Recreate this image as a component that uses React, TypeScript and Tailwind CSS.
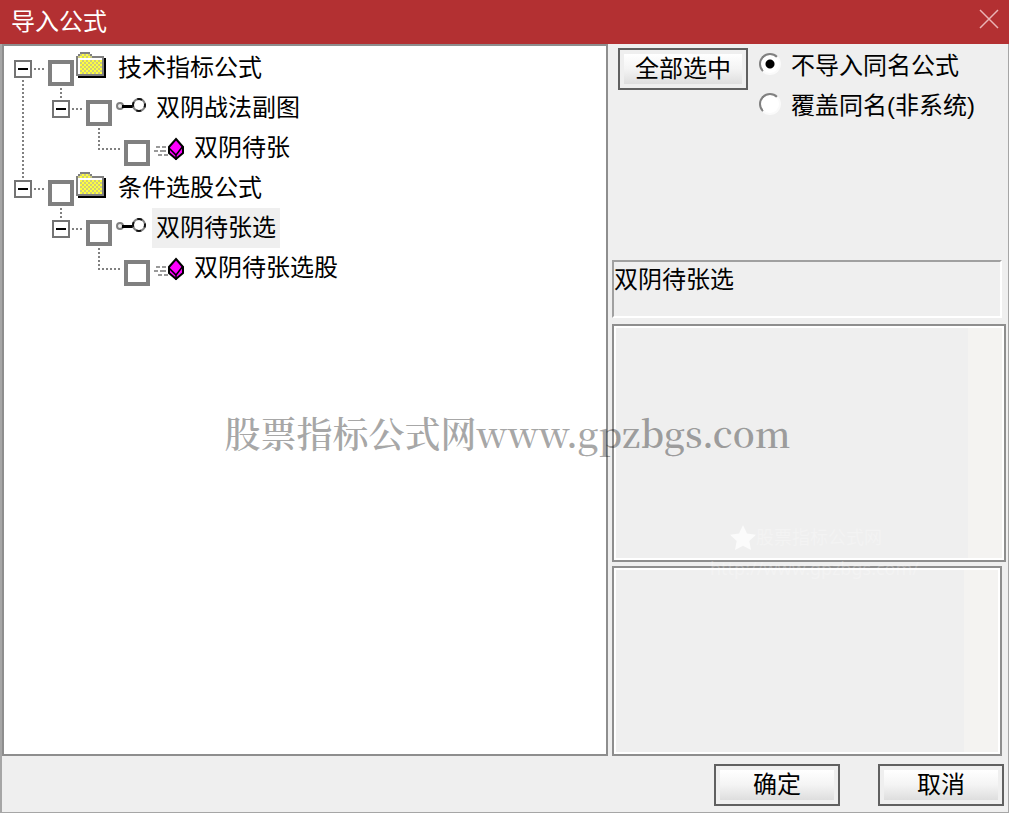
import { useState } from 'react';
import type { ReactNode } from 'react';

type IconKind = 'folder' | 'key' | 'formula';
// what the guide cell in front of a row's tick box holds
type Guide = 'blank' | 'line' | 'lineEnd';

interface TreeRow {
    id: string;
    label: string;
    icon: IconKind;
    level: 1 | 2 | 3;
    trunk: boolean; // the root line passes by this row
    first?: boolean;
    last?: boolean;
}

const rows: TreeRow[] = [
    { id: 'tech', label: '技术指标公式', icon: 'folder', level: 1, trunk: true, first: true },
    { id: 'tech-sub', label: '双阴战法副图', icon: 'key', level: 2, trunk: true },
    { id: 'tech-item', label: '双阴待张', icon: 'formula', level: 3, trunk: true },
    { id: 'cond', label: '条件选股公式', icon: 'folder', level: 1, trunk: false, last: true },
    { id: 'cond-sub', label: '双阴待张选', icon: 'key', level: 2, trunk: false },
    { id: 'cond-item', label: '双阴待张选股', icon: 'formula', level: 3, trunk: false },
];

const V_DOTS = 'w-0.5 bg-[linear-gradient(#808080_50%,transparent_50%)] bg-[length:2px_4px]';
const H_DOTS = 'h-0.5 bg-[linear-gradient(90deg,#808080_50%,transparent_50%)] bg-[length:4px_2px]';

function FolderIcon() {
    return (
        <svg width="40" height="40" viewBox="0 0 40 40" shapeRendering="crispEdges" aria-hidden="true">
            <defs>
                <pattern id="weave" width="4" height="4" patternUnits="userSpaceOnUse">
                    <rect width="4" height="4" fill="#ffff3c" />
                    <rect width="2" height="2" fill="#cccc80" />
                    <rect x="2" y="2" width="2" height="2" fill="#cccc80" />
                </pattern>
            </defs>
            <path d="M4 10h28v20H4z" fill="#000" />
            <path d="M6 4h10v2h2v2h12v20H2V8h2V6h2z" fill="#808080" />
            <path d="M6 6h10v2h2v2H4V8h2z" fill="url(#weave)" />
            <path d="M4 10h24v16H4z" fill="#fff" />
            <path d="M6 12h22v14H6z" fill="url(#weave)" />
        </svg>
    );
}

function KeyIcon() {
    return (
        <svg width="40" height="40" viewBox="0 0 40 40" aria-hidden="true">
            <circle cx="8" cy="18" r="3" fill="#eee" stroke="#808080" strokeWidth="2" />
            <path d="M10 17h11v3H10z" fill="#000" />
            <circle cx="27" cy="17" r="6" fill="#fff" stroke="#808080" strokeWidth="2" />
            <circle cx="27" cy="17" r="6" fill="none" stroke="#111" strokeWidth="2" strokeDasharray="5 4.425" strokeDashoffset="2.500" />
        </svg>
    );
}

function FormulaIcon() {
    return (
        <svg width="40" height="40" viewBox="0 0 40 40" aria-hidden="true">
            <path d="M6 19h4m2 0h4M4 23h4m2 0h6M8 27h4m2 0h4" stroke="#999" strokeWidth="2" />
            <path d="M26 11l7 8v6l-7 6-7-6v-6z" fill="#f0f" stroke="#000" strokeWidth="2" />
            <path d="M19 20l7 7 7-9M26 27v5" fill="none" stroke="#000" strokeWidth="1.500" />
        </svg>
    );
}

function RowIcon({ kind }: { kind: IconKind }) {
    if (kind === 'folder') return <FolderIcon />;
    if (kind === 'key') return <KeyIcon />;
    return <FormulaIcon />;
}

function GuideCell({ kind }: { kind: Guide }) {
    return (
        <div className="w-[38px] h-10 shrink-0 pl-3">
            {kind === 'line' && <div className={`h-10 ${V_DOTS}`} />}
            {kind === 'lineEnd' && (
                <>
                    <div className={`h-5 ${V_DOTS}`} />
                    <div className={`w-[22px] ${H_DOTS}`} />
                </>
            )}
        </div>
    );
}

function ExpanderCell({ row, onToggle }: { row: TreeRow; onToggle: () => void }) {
    return (
        <div className="w-[38px] h-10 shrink-0 pl-1 flex flex-col">
            <div className="h-3 pl-2">{!row.first && <div className={`h-2.5 ${V_DOTS}`} />}</div>
            <div className="flex items-center gap-0.5">
                <button
                    type="button"
                    aria-label={`折叠 ${row.label}`}
                    onClick={onToggle}
                    className="size-[18px] border-2 border-[#747474] bg-white flex items-center justify-center"
                >
                    <span className="w-2.5 h-0.5 bg-black" />
                </button>
                <div className={`w-2.5 ${H_DOTS}`} />
            </div>
            <div className="pl-2 pt-0.5">{row.level === 1 && !row.last && <div className={`h-2 ${V_DOTS}`} />}</div>
        </div>
    );
}

function PushButton({ children, className = '' }: { children: ReactNode; className?: string }) {
    return (
        <button type="button" className={`h-[42px] border-2 border-[#606060] bg-[#efefef] p-1 ${className}`}>
            <span className="flex h-full items-center justify-center bg-linear-to-b from-white via-[#f4f4f4] to-[#dedede]">
                {children}
            </span>
        </button>
    );
}

function RadioOption({ label, checked, onChange }: { label: string; checked: boolean; onChange: () => void }) {
    return (
        <label className="flex h-10 items-center gap-2.5 whitespace-nowrap">
            <input
                type="radio"
                name="conflict"
                checked={checked}
                onChange={onChange}
                className="mb-1 size-[22px] shrink-0 appearance-none rounded-full border-2 border-t-[#808080] border-l-[#808080] border-r-[#fafafa] border-b-[#fafafa] bg-white checked:bg-[radial-gradient(circle,#000_4px,#fff_5px)]"
            />
            {label}
        </label>
    );
}

function TextPane({ label, className, children }: { label: string; className: string; children?: ReactNode }) {
    return (
        <div className={`relative flex border-2 border-[#8e8e8e] bg-white p-0.5 ${className}`}>
            <textarea readOnly aria-label={label} className="block min-w-0 flex-1 resize-none bg-[#efefef] outline-none" />
            <div className="w-[34px] bg-[#f4f3f1]" />
            {children}
        </div>
    );
}

export default function App() {
    const [selected, setSelected] = useState('cond-sub');
    const [checked, setChecked] = useState<string[]>([]);
    const [mode, setMode] = useState<'skip' | 'overwrite'>('skip');

    const toggle = (id: string) =>
        setChecked(prev => (prev.includes(id) ? prev.filter(x => x !== id) : [...prev, id]));

    const current = rows.find(r => r.id === selected);

    return (
        <div className="relative flex min-h-screen flex-col bg-[#efefef] font-['Liberation_Sans','Noto_Sans_CJK_SC',sans-serif] text-2xl text-black">
            <header className="flex h-11 items-center justify-between bg-[#b33032] pr-2.5 pl-[11px] text-white">
                <h1 className="leading-10">导入公式</h1>
                <button type="button" aria-label="关闭" className="pb-1.5">
                    <svg width="20" height="20" viewBox="0 0 20 20" stroke="#eab4b5" strokeWidth="1.500">
                        <path d="M1 1l18 18M19 1L1 19" />
                    </svg>
                </button>
            </header>

            <div className="flex flex-1 flex-col border-r border-b border-l-2 border-[#a6a6a6]">
                <main className="grid flex-1 grid-cols-[minmax(0,1fr)_400px]">
                    {/* Formula tree */}
                    <ul className="border-2 border-[#8e8e8e] bg-white pt-0.5 pl-1.5">
                        {rows.map(row => (
                            <li key={row.id} className="flex h-10 items-start">
                                {row.level > 1 && <GuideCell kind={row.trunk ? 'line' : 'blank'} />}
                                {row.level > 2 && <GuideCell kind="blank" />}
                                {row.level === 3 ? (
                                    <GuideCell kind="lineEnd" />
                                ) : (
                                    <ExpanderCell row={row} onToggle={() => setSelected(row.id)} />
                                )}
                                <input
                                    type="checkbox"
                                    id={row.id}
                                    checked={checked.includes(row.id)}
                                    onChange={() => toggle(row.id)}
                                    className="mt-3 size-[26px] shrink-0 appearance-none border-4 border-[#808080] bg-white checked:bg-[#808080]"
                                />
                                <RowIcon kind={row.icon} />
                                <label
                                    htmlFor={row.id}
                                    onClick={() => setSelected(row.id)}
                                    className={`px-1 leading-10 whitespace-nowrap ${selected === row.id ? 'bg-[#efefef]' : ''}`}
                                >
                                    {row.label}
                                </label>
                            </li>
                        ))}
                    </ul>

                    {/* Options and details */}
                    <div className="flex flex-col pr-0.5 pl-1">
                        <div className="flex h-[216px] items-start pl-1.5">
                            <PushButton className="mt-1 w-[130px] shrink-0">全部选中</PushButton>
                            <fieldset className="pt-0.5 pl-[11px]">
                                <RadioOption label="不导入同名公式" checked={mode === 'skip'} onChange={() => setMode('skip')} />
                                <RadioOption label="覆盖同名(非系统)" checked={mode === 'overwrite'} onChange={() => setMode('overwrite')} />
                            </fieldset>
                        </div>
                        <p className="mr-1 h-[58px] border-2 border-t-[#a0a0a0] border-r-white border-b-white border-l-[#a0a0a0] leading-9">
                            {current?.label}
                        </p>
                        <TextPane label="公式说明" className="mt-1.5 flex-1">
                            <div className="pointer-events-none absolute -bottom-6 left-24 z-10 text-white/25">
                                <div className="flex items-center pl-5 text-lg">
                                    <svg width="26" height="26" viewBox="0 0 26 26" fill="#fbfbfb" aria-hidden="true">
                                        <path d="M13 0l4 8.500 9 1.200-6.700 6.300L21 25l-8-4.300L5 25l1.700-9L0 9.700l9-1.200z" />
                                    </svg>
                                    <span>股票指标公式网</span>
                                </div>
                                <div className="font-['Noto_Sans',sans-serif] text-lg leading-8">http://www.gpzbgs.com/</div>
                            </div>
                        </TextPane>
                        <TextPane label="公式源码" className="mt-1 mr-1 h-[190px]" />
                    </div>
                </main>

                <footer className="flex justify-end gap-[38px] pt-2 pr-1 pb-1.5">
                    <PushButton className="w-[126px]">确定</PushButton>
                    <PushButton className="w-[126px]">取消</PushButton>
                </footer>
            </div>

            {/* Site mark laid over the whole dialog */}
            <div className="pointer-events-none absolute inset-x-0 top-[413px] z-20 pl-1.5 text-center font-['Noto_Serif_CJK_SC','Liberation_Serif',serif] text-4xl font-semibold whitespace-nowrap text-black/35">
                股票指标公式网www.gpzbgs.com
            </div>
        </div>
    );
}
